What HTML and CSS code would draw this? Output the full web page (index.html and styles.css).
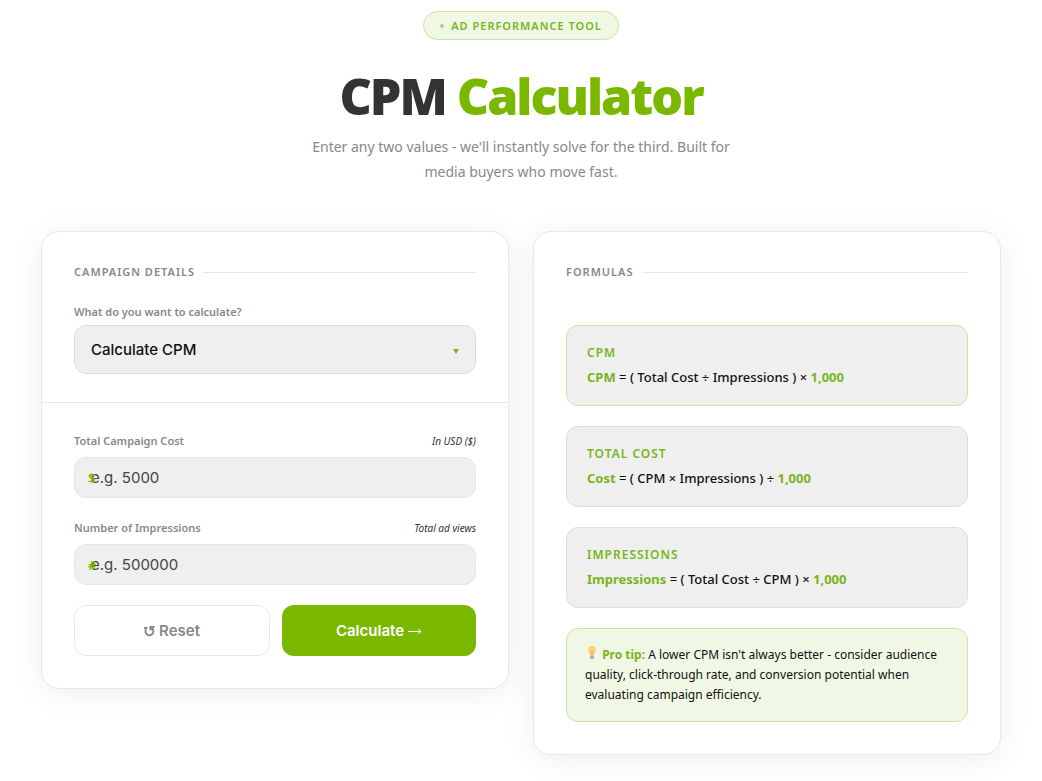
FILE: index.html
```html
<!DOCTYPE html>
<html lang="en">
  <head>
    <meta charset="utf-8" />
    <title>CPM Calculator</title>
    <meta name="viewport" content="width=device-width, initial-scale=1" />
    <link rel="stylesheet" href="styles.css">
  </head>
  <body>
    <main class="page">
      <header class="hero">
        <div class="badge"><span class="badge-dot"></span>AD PERFORMANCE TOOL</div>
        <h1>CPM <span>Calculator</span></h1>
        <p>Enter any two values - we'll instantly solve for the third. Built for media buyers who move fast.</p>
      </header>

      <div class="grid">
        <form class="card">
          <div class="card-section">
            <h2 class="section-title">CAMPAIGN DETAILS</h2>
            <label class="mode-label" for="mode">What do you want to calculate?</label>
            <div class="select-wrap">
              <select id="mode">
                <option>Calculate CPM</option>
                <option>Calculate Total Cost</option>
                <option>Calculate Impressions</option>
              </select>
              <svg class="select-arrow" viewBox="0 0 6 5" aria-hidden="true"><path d="M0 0h6L3 5z" /></svg>
            </div>
          </div>

          <div class="card-section fields">
            <div class="field">
              <div class="field-head">
                <label for="cost">Total Campaign Cost</label>
                <em>In USD ($)</em>
              </div>
              <div class="input-wrap">
                <input id="cost" type="text" inputmode="decimal" placeholder="e.g. 5000" />
                <span class="prefix">$</span>
              </div>
            </div>
            <div class="field">
              <div class="field-head">
                <label for="impressions">Number of Impressions</label>
                <em>Total ad views</em>
              </div>
              <div class="input-wrap">
                <input id="impressions" type="text" inputmode="numeric" placeholder="e.g. 500000" />
                <span class="prefix">#</span>
              </div>
            </div>
            <div class="buttons">
              <button class="btn btn-reset" type="reset">
                <svg width="11" height="12" viewBox="0 0 11 12" aria-hidden="true">
                  <path d="M10.500 2H6.500v3.500" />
                  <path d="M7 2.600A4 4 0 1 1 2 4.200M0 3h3.500" />
                </svg>
                Reset
              </button>
              <button class="btn btn-calc" type="button">
                Calculate
                <svg width="14" height="8" viewBox="0 0 14 8" aria-hidden="true">
                  <path d="M0 4.500h13M10 2l3 2.500L10 7" />
                </svg>
              </button>
            </div>
          </div>
        </form>

        <section class="card">
          <div class="card-section formulas">
            <h2 class="section-title">FORMULAS</h2>
            <div class="formula active">
              <h3>CPM</h3>
              <p><b>CPM</b> = ( Total Cost ÷ Impressions ) × <b>1,000</b></p>
            </div>
            <div class="formula">
              <h3>TOTAL COST</h3>
              <p><b>Cost</b> = ( CPM × Impressions ) ÷ <b>1,000</b></p>
            </div>
            <div class="formula">
              <h3>IMPRESSIONS</h3>
              <p><b>Impressions</b> = ( Total Cost ÷ CPM ) × <b>1,000</b></p>
            </div>
            <p class="tip">
              <svg class="bulb" width="14" height="14" viewBox="0 0 14 14" aria-hidden="true">
                <path fill="#ffd071" d="M7 0a4 4 0 0 0-4 4c0 2 1.600 2.700 1.900 5h4.200C9.400 6.700 11 6 11 4a4 4 0 0 0-4-4z" />
                <path fill="#f5b754" d="M6 5h2v4H6z" />
                <path fill="#aab4bd" d="M5 9.500h4V12l-1 1.200H6L5 12z" />
              </svg>
              <b>Pro tip:</b> A lower CPM isn't always better - consider audience quality, click-through rate, and conversion potential when evaluating campaign efficiency.
            </p>
          </div>
        </section>
      </div>
    </main>
  </body>
</html>
```
FILE: styles.css
```css
* {
  box-sizing: border-box;
}
body {
  margin: 0;
  background: #fff;
  color: #111;
  font-family: 'Noto Sans', 'Open Sans', sans-serif;
}
h1,
h2,
h3,
p {
  margin: 0;
}
.page {
  max-width: 1000px;
  margin: 0 auto;
  padding: 11px 20px 26px;
}

.hero {
  display: flex;
  flex-direction: column;
  align-items: center;
  text-align: center;
  margin-bottom: 47px;
}
.badge {
  display: flex;
  align-items: center;
  gap: 7px;
  padding: 5px 16px;
  border: 1px solid #cfe3a0;
  border-radius: 20px;
  background: #f0f7e4;
  color: #7ab51d;
  font-size: 11px;
  line-height: 17px;
  font-weight: 600;
  letter-spacing: 1px;
}
.badge-dot {
  width: 4px;
  height: 4px;
  border-radius: 50%;
  background: #b2d478;
}
.hero h1 {
  margin-top: 27px;
  color: #333;
  font-family: 'Open Sans', sans-serif;
  font-size: 50px;
  line-height: 58px;
  font-weight: 800;
  letter-spacing: -2px;
}
.hero h1 span {
  color: #7ab800;
}
.hero p {
  max-width: 460px;
  margin-top: 9px;
  color: #888;
  font-size: 14px;
  line-height: 25px;
}

.grid {
  display: grid;
  grid-template-columns: 1fr 1fr;
  gap: 24px;
  align-items: start;
}
.card {
  border: 1px solid #e8e8e8;
  border-radius: 18px;
  background: #fff;
  box-shadow: 0 4px 32px rgba(0, 0, 0, 0.07);
}
.card-section {
  padding: 32px 32px 28px;
}
.section-title {
  display: flex;
  align-items: center;
  gap: 8px;
  margin-bottom: 24px;
  color: #888;
  font-size: 11px;
  line-height: 16px;
  font-weight: 600;
  letter-spacing: 1px;
}
.section-title::after {
  content: '';
  flex: 1;
  height: 1px;
  background: #e8e8e8;
}

label {
  color: #888;
  font-size: 11px;
  font-weight: 600;
}
.mode-label {
  display: block;
  margin-bottom: 5px;
  line-height: 16px;
}
.select-wrap,
.input-wrap {
  position: relative;
}
select,
input {
  display: block;
  width: 100%;
  padding: 0 16px;
  border: 1px solid #ddd;
  border-radius: 12px;
  background: #efefef;
  color: #111;
  font-family: Inter, sans-serif;
  font-size: 15px;
}
select {
  height: 49px;
  appearance: none;
  font-weight: 500;
}
.select-arrow {
  position: absolute;
  top: 24px;
  right: 17px;
  width: 6px;
  height: 5px;
  fill: #7ab51d;
}

.fields {
  display: flex;
  flex-direction: column;
  gap: 20px;
  padding: 28px 32px 32px;
  border-top: 1px solid #e8e8e8;
}
.field-head {
  display: flex;
  justify-content: space-between;
  margin-bottom: 6px;
  line-height: 20px;
}
.field-head em {
  color: #333;
  font-size: 10px;
}
input {
  height: 41px;
  border-color: #e5e5e5;
}
input::placeholder {
  color: #444;
}
.prefix {
  position: absolute;
  top: 11px;
  left: 14px;
  color: #7ab800;
  font-size: 13px;
  line-height: 20px;
  font-weight: 600;
}

.buttons {
  display: flex;
  gap: 12px;
}
.btn {
  display: flex;
  flex: 1;
  align-items: center;
  justify-content: center;
  gap: 4px;
  height: 51px;
  padding: 0 16px;
  border-radius: 12px;
  font-family: Inter, sans-serif;
  font-size: 15px;
  font-weight: 600;
}
.btn svg {
  fill: none;
  stroke: currentColor;
}
.btn-reset {
  border: 1px solid #e8e8e8;
  background: #fff;
  color: #888;
}
.btn-reset svg {
  stroke-width: 2;
}
.btn-calc {
  border: 0;
  background: #7ab800;
  color: #fff;
}

.formulas {
  display: flex;
  flex-direction: column;
  gap: 20px;
  padding-bottom: 32px;
}
.formulas .section-title {
  margin-bottom: 25px;
}
.formula {
  padding: 17px 20px 18px;
  border: 1px solid #ddd;
  border-radius: 12px;
  background: #efefef;
}
.formula.active {
  border-color: #cfe3a0;
}
.formula h3 {
  margin-bottom: 4px;
  color: #7ab51d;
  font-size: 12px;
  line-height: 20px;
  font-weight: 600;
  letter-spacing: 1px;
}
.formula p {
  font-size: 13px;
  line-height: 20px;
  font-weight: 500;
}
.formula b,
.tip b {
  color: #7ab51d;
  font-weight: 700;
}
.tip {
  padding: 16px 18px;
  border: 1px solid #cfe3a0;
  border-radius: 12px;
  background: #f0f7e4;
  font-size: 12px;
  line-height: 20px;
}
.bulb {
  vertical-align: -1px;
}
```
